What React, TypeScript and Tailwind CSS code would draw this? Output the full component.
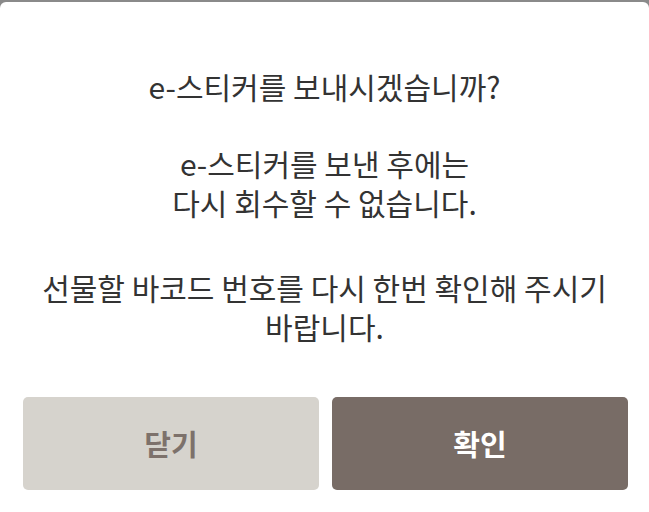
const lines = [
  ["e-스티커를 보내시겠습니까?"],
  ["e-스티커를 보낸 후에는", "다시 회수할 수 없습니다."],
  ["선물할 바코드 번호를 다시 한번 확인해 주시기", "바랍니다."],
];

export default function App() {
  return (
    <div
      className="h-[512px] w-[649px] bg-[#8a8a8a] pt-[2px]"
      style={{ fontFamily: '"Noto Sans CJK KR", "Noto Sans", sans-serif' }}
    >
      <div className="flex h-[510px] flex-col rounded-t-[6px] bg-white">
        <div className="flex flex-col items-center gap-[38px] pt-[65px] text-center text-[30px] leading-[39px] text-[#333333]">
          {lines.map((group, i) => (
            <div key={i} className={i === 2 ? "mt-[8px]" : ""}>
              {group.map((line) => (
                <p key={line} className="h-[39px] whitespace-nowrap">
                  {line}
                </p>
              ))}
            </div>
          ))}
        </div>
        <div className="mt-auto mb-[22px] flex gap-[13px] pl-[23px] pr-[21px]">
          <button className="flex h-[93px] flex-1 items-center justify-center rounded-[5px] bg-[#d6d3cd] text-[29px] font-bold text-[#7d716b]">
            닫기
          </button>
          <button className="flex h-[93px] flex-1 items-center justify-center rounded-[5px] bg-[#786c66] text-[29px] font-bold text-white">
            확인
          </button>
        </div>
      </div>
    </div>
  );
}
